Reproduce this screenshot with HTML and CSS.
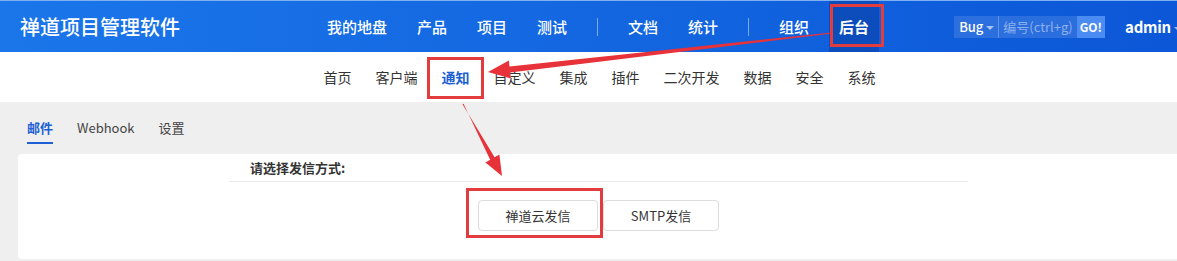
FILE: index.html
```html
<!DOCTYPE html>
<html lang="zh-CN">
<head>
    <meta charset="UTF-8">
    <meta name="viewport" content="width=device-width, initial-scale=1.0">
    <title>禅道项目管理软件</title>
    <link rel="stylesheet" href="styles.css">
</head>
<body>
    <div class="header">
        <div class="brand">禅道项目管理软件</div>
        <div class="main-nav">
            <a>我的地盘</a>
            <a>产品</a>
            <a>项目</a>
            <a>测试</a>
            <span class="divider"></span>
            <a>文档</a>
            <a>统计</a>
            <span class="divider"></span>
            <a>组织</a>
            <a class="active">后台</a>
        </div>
        <div class="search">
            <span class="search-type">Bug <i class="caret"></i></span>
            <span class="search-input">编号(ctrl+g)</span>
            <span class="search-go">GO!</span>
        </div>
        <div class="user">admin <i class="caret"></i></div>
    </div>

    <div class="sub-nav">
        <a>首页</a>
        <a>客户端</a>
        <a class="active">通知</a>
        <a>自定义</a>
        <a>集成</a>
        <a>插件</a>
        <a>二次开发</a>
        <a>数据</a>
        <a>安全</a>
        <a>系统</a>
    </div>

    <div class="main">
        <div class="tabs">
            <a class="active">邮件</a>
            <a>Webhook</a>
            <a>设置</a>
        </div>
        <div class="panel">
            <div class="panel-body">
                <div class="panel-title">请选择发信方式:</div>
                <div class="btn-group">
                    <button>禅道云发信</button>
                    <button>SMTP发信</button>
                </div>
            </div>
        </div>
    </div>

    <!-- 标注 -->
    <div class="mark mark-admin"></div>
    <div class="mark mark-notify"></div>
    <div class="mark mark-btn"></div>
    <svg class="arrows" width="1177" height="261" viewBox="0 0 1177 261">
        <polygon points="832.1,33.6 510.2,72.5 510.9,78.5 488,72 508.9,60.6 509.5,66.5 831.9,32.4" />
        <polygon points="463.5,103.8 490.2,159.7 485.4,162.4 502,176 499.4,154.6 494.6,157.3 462.5,104.2" />
    </svg>
</body>
</html>
```

FILE: styles.css
```css
body {
    margin: 0;
    font-family: "Noto Sans CJK SC", "Noto Sans", sans-serif;
    font-size: 14px;
    color: #333;
    background-color: #efefef;
    position: relative;
    overflow: hidden;
}

a {
    cursor: pointer;
}

.header {
    display: flex;
    align-items: center;
    height: 52px;
    background: linear-gradient(90deg, #1b76ea, #0c57d7);
    color: #fff;
    border-top: 1px solid #7fb0f2;
    box-sizing: border-box;
    overflow: hidden;
    white-space: nowrap;
}

.header > * {
    flex-shrink: 0;
}

.brand {
    margin-left: 20px;
    margin-right: 137px;
    font-size: 20px;
    font-weight: 500;
}

.main-nav {
    display: flex;
    align-items: center;
    gap: 10px;
    height: 100%;
}

.main-nav a {
    padding: 0 10px;
    line-height: 51px;
    font-size: 15px;
    font-weight: 500;
}

.main-nav a.active {
    background-color: rgba(0, 20, 90, 0.25);
    font-weight: 700;
}

.main-nav .divider {
    width: 1px;
    height: 18px;
    margin: 0 10px;
    background-color: rgba(255, 255, 255, 0.45);
}

.search {
    display: flex;
    align-items: center;
    height: 22px;
    margin-left: 75px;
    font-size: 13px;
    line-height: 22px;
}

.search-type {
    padding: 0 4px 0 5px;
    background-color: rgba(255, 255, 255, 0.12);
    border-right: 1px solid rgba(255, 255, 255, 0.25);
    font-weight: 500;
}

.search-input {
    padding: 0 4px;
    color: #8db0ec;
    background-color: rgba(255, 255, 255, 0.12);
}

.search-go {
    padding: 0 3px;
    background-color: #4b8cf2;
    font-weight: 700;
    font-size: 12px;
}

.caret {
    display: inline-block;
    width: 0;
    height: 0;
    vertical-align: middle;
    border-left: 4px solid transparent;
    border-right: 4px solid transparent;
    border-top: 4px solid rgba(255, 255, 255, 0.6);
}

.user {
    margin-left: 20px;
    font-size: 15px;
    font-weight: 600;
    letter-spacing: -0.3px;
}

.sub-nav {
    display: flex;
    justify-content: center;
    align-items: center;
    gap: 24px;
    height: 50px;
    padding-left: 22px;
    background-color: #fff;
    white-space: nowrap;
}

.sub-nav a {
    color: #333;
}

.sub-nav a.active {
    color: #1d5fd5;
    font-weight: 700;
}

.main {
    padding-top: 14px;
}

.tabs {
    display: flex;
    gap: 24px;
    padding-left: 27px;
    height: 38px;
    font-size: 13px;
}

.tabs a {
    height: 26px;
    line-height: 24px;
    color: #444;
}

.tabs a.active {
    color: #1d5fd5;
    font-weight: 700;
    border-bottom: 2px solid #1d5fd5;
}

.panel {
    margin-left: 18px;
    height: 105px;
    background-color: #fff;
    border-radius: 4px 0 0 4px;
}

.panel-body {
    width: 739px;
    margin-left: 211px;
}

.panel-title {
    height: 27px;
    line-height: 28px;
    padding-left: 21px;
    font-size: 13px;
    font-weight: 700;
    border-bottom: 1px solid #e9e9e9;
}

.btn-group {
    display: flex;
    justify-content: center;
    gap: 5px;
    padding-top: 18px;
}

.btn-group button {
    height: 31px;
    padding: 0;
    border: 1px solid #dcdcdc;
    border-radius: 4px;
    background-color: #fff;
    color: #333;
    font-family: inherit;
    font-size: 13px;
}

.btn-group button:first-child {
    width: 120px;
}

.btn-group button:last-child {
    width: 116px;
}

.mark {
    position: absolute;
    border: 3px solid #e23c3f;
    box-sizing: border-box;
}

.mark-admin {
    left: 830px;
    top: 4px;
    width: 54px;
    height: 43px;
}

.mark-notify {
    left: 427px;
    top: 57px;
    width: 57px;
    height: 42px;
}

.mark-btn {
    left: 466px;
    top: 188px;
    width: 137px;
    height: 50px;
}

.arrows {
    position: absolute;
    left: 0;
    top: 0;
    pointer-events: none;
}

.arrows polygon {
    fill: #e8323a;
}
```
